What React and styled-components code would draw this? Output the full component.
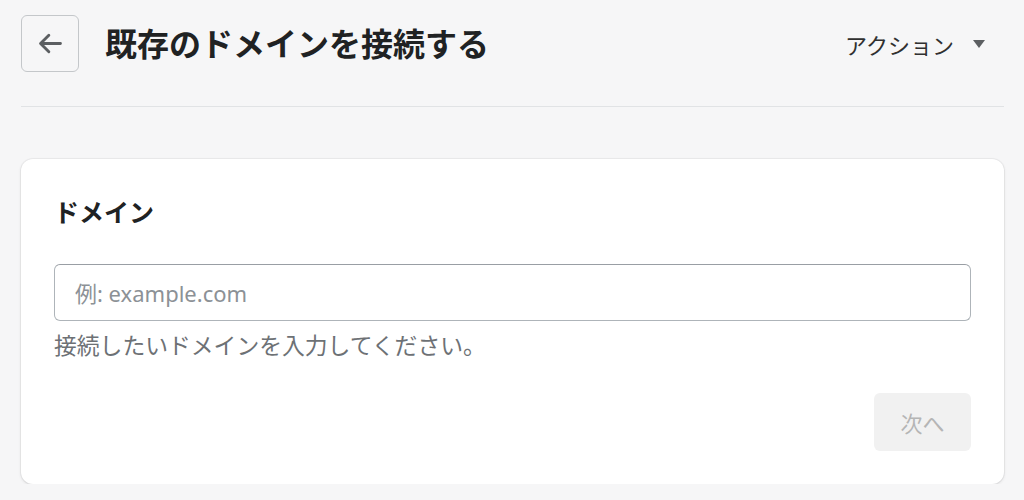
import React from "react";
import styled, { createGlobalStyle } from "styled-components";

const GlobalStyle = createGlobalStyle`
  body {
    margin: 0;
    background: #f6f6f7;
    font-family: "Noto Sans", "Noto Sans CJK JP", sans-serif;
    color: #202223;
  }
`;

const Page = styled.div`
  padding: 15px 20px 0 21px;
`;

const Header = styled.header`
  display: flex;
  align-items: center;
  height: 57px;
`;

const BackButton = styled.button`
  width: 58px;
  height: 57px;
  display: flex;
  align-items: center;
  justify-content: center;
  background: #f6f6f7;
  border: 1.5px solid #c4c7ca;
  border-radius: 6px;
  padding: 0;
  cursor: pointer;
  svg {
    width: 31px;
    height: 31px;
  }
`;

const Title = styled.h1`
  margin: 0 0 0 26px;
  font-size: 32px;
  font-weight: 700;
  line-height: 40px;
  flex: 1;
`;

const Actions = styled.button`
  display: flex;
  align-items: center;
  gap: 19px;
  background: none;
  border: none;
  padding: 0;
  margin-right: 19px;
  font-family: inherit;
  font-size: 22px;
  color: #303030;
  cursor: pointer;
`;

const Caret = styled.span`
  width: 0;
  height: 0;
  border-left: 6.5px solid transparent;
  border-right: 6.5px solid transparent;
  border-top: 8px solid #5c5f62;
`;

const Divider = styled.hr`
  margin: 34px 0 52px;
  border: none;
  border-top: 1.5px solid #e1e3e5;
`;

const Card = styled.section`
  background: #fff;
  border-radius: 12px;
  box-shadow: 0 0 0 1px rgba(63, 63, 68, 0.05), 0 1px 3px rgba(63, 63, 68, 0.15);
  padding: 33px;
`;

const CardTitle = styled.h2`
  margin: 0 0 32px;
  font-size: 25px;
  line-height: 40px;
  font-weight: 700;
`;

const Input = styled.input`
  display: block;
  box-sizing: border-box;
  width: 100%;
  height: 57px;
  border: 1.5px solid #aeb4b9;
  border-top-color: #999ea4;
  border-radius: 6px;
  padding: 0 20px;
  font-family: inherit;
  font-size: 22px;
  color: #202223;
  &::placeholder {
    color: #8c9196;
  }
`;

const Help = styled.p`
  margin: 11px 0 0;
  font-size: 22.8px;
  line-height: 28px;
  color: #6d7175;
`;

const Footer = styled.div`
  display: flex;
  justify-content: flex-end;
  margin-top: 33px;
`;

const NextButton = styled.button`
  width: 97px;
  height: 58px;
  background: #f1f1f1;
  border: none;
  border-radius: 6px;
  font-family: inherit;
  font-size: 22px;
  color: #b5b5b5;
`;

export default function App() {
  return (
    <>
      <GlobalStyle />
      <Page>
        <Header>
          <BackButton aria-label="戻る">
            <svg viewBox="0 0 28 28" fill="none" stroke="#5c5f62" strokeWidth="2.6" strokeLinecap="round" strokeLinejoin="round">
              <path d="M23 14H5.5M12.5 6.5L5 14l7.5 7.5" />
            </svg>
          </BackButton>
          <Title>既存のドメインを接続する</Title>
          <Actions>
            アクション
            <Caret />
          </Actions>
        </Header>
        <Divider />
        <Card>
          <CardTitle>ドメイン</CardTitle>
          <Input placeholder="例: example.com" />
          <Help>接続したいドメインを入力してください。</Help>
          <Footer>
            <NextButton disabled>次へ</NextButton>
          </Footer>
        </Card>
      </Page>
    </>
  );
}
